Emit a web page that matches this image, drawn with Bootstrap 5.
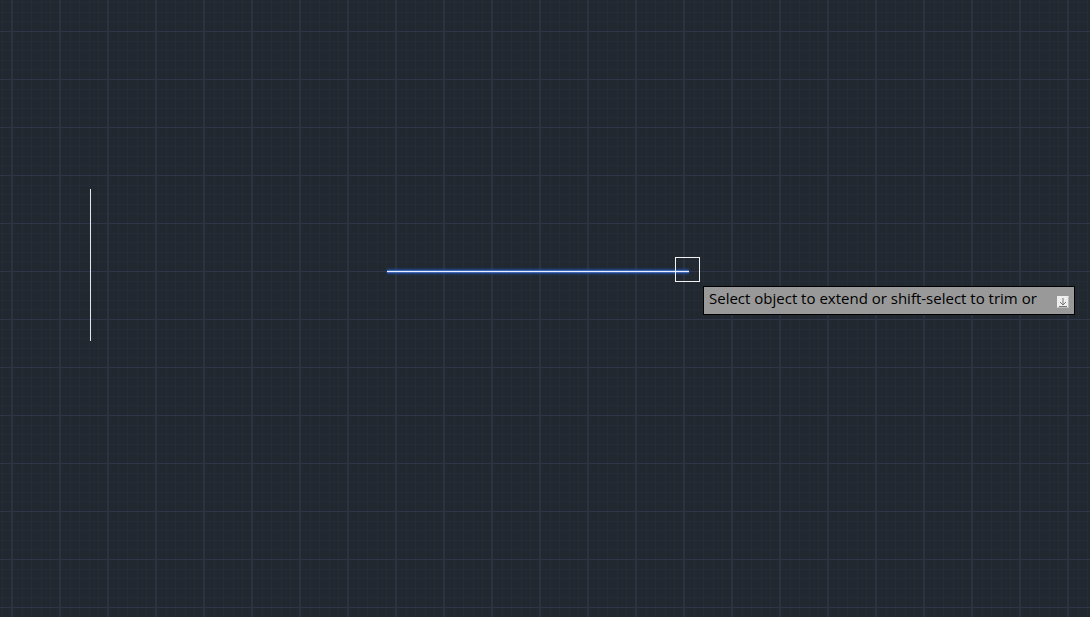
<!DOCTYPE html>
<html lang="en">
<head>
<meta charset="utf-8">
<meta name="viewport" content="width=device-width, initial-scale=1">
<title>Drawing – Extend</title>
<link href="https://cdn.jsdelivr.net/npm/bootstrap@5.3.0/dist/css/bootstrap.min.css" rel="stylesheet">
<style>
  body { background: #212830; font-family: "Open Sans", "Noto Sans", sans-serif; }
  .drawing { background: #212830; }
  .prompt {
    left: 703px; top: 286px; width: 372px; height: 29px;
    padding: 0 5px; background: #999; border: 1px solid #000;
    color: #000; font-size: 15px; font-weight: 370; line-height: 23px;
  }
  .options { width: 12px; height: 12px; margin-top: 9px; }
</style>
</head>
<body>
<main class="drawing position-relative vh-100 overflow-hidden">
  <svg class="d-block w-100 h-100" role="img" aria-label="Model space">
    <defs>
      <pattern id="grid" x="12" y="31" width="48" height="48" patternUnits="userSpaceOnUse">
        <path d="M10 0h1v48h-1zM19 0h1v48h-1zM29 0h1v48h-1zM38 0h1v48h-1zM0 10h48v1H0zM0 19h48v1H0zM0 29h48v1H0zM0 38h48v1H0z" fill="#252c37"/>
        <path d="M0 0h1v48h-1z" fill="#2b3244"/>
        <path d="M0 0h48v1H0z" fill="#2f364a"/>
        <path d="M47 0h1v48h-1z" fill="#2a3141"/>
      </pattern>
      <filter id="glow" x="380" y="260" width="320" height="22" filterUnits="userSpaceOnUse">
        <feGaussianBlur stdDeviation="1"/>
      </filter>
    </defs>
    <rect width="100%" height="100%" fill="url(#grid)"/>
    <path d="M90 189h1v152h-1z" fill="#e4e6e8"/>
    <path d="M387 269h302v5H387z" fill="#22468c" filter="url(#glow)"/>
    <path d="M387 270h302v3H387z" fill="#3f68b8"/>
    <path d="M387 271h302v1H387z" fill="#e8f0ff"/>
    <rect x="675.5" y="257.5" width="24" height="24" fill="none" stroke="#f2f2f2"/>
  </svg>
  <div class="prompt position-absolute d-flex align-items-start justify-content-between text-nowrap" role="status">
    <span>Select object to extend or shift-select to trim or</span>
    <button class="options btn p-0 border-0 rounded-0 d-flex" type="button" aria-label="Options">
      <svg width="12" height="12" viewBox="0 0 12 12" aria-hidden="true">
        <path d="M0 0h12v12H0z" fill="#eee"/>
        <path d="M.5 11.5h11V.5" fill="none" stroke="#bbb"/>
        <path d="M6 2v7M3 6l3 3 3-3M2 10.500h8" fill="none" stroke="#777"/>
      </svg>
    </button>
  </div>
</main>
<script src="https://cdn.jsdelivr.net/npm/bootstrap@5.3.0/dist/js/bootstrap.bundle.min.js"></script>
</body>
</html>
